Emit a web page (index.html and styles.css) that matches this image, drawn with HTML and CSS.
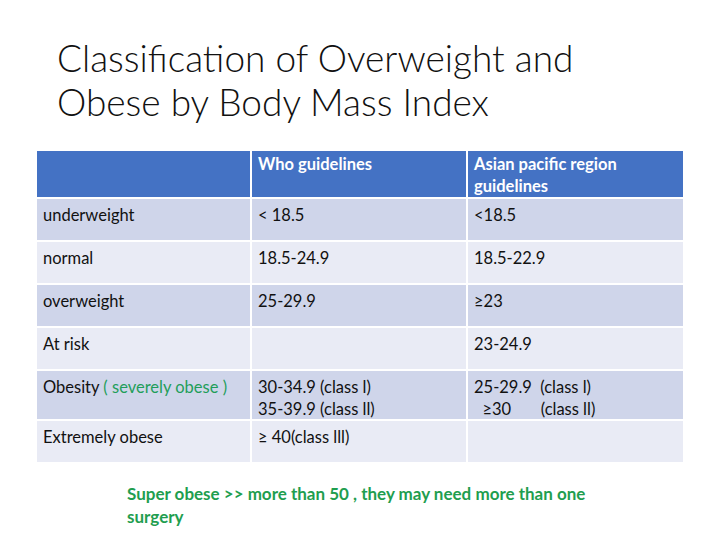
FILE: index.html
```html
<!DOCTYPE html>
<html>
<head>
<meta charset="utf-8">
<link rel="stylesheet" href="styles.css">
</head>
<body>
<div class="slide">
  <h1 class="title">Classification of Overweight and<br>Obese by Body Mass Index</h1>
  <div class="grid">
    <div class="cell head"></div>
    <div class="cell head">Who guidelines</div>
    <div class="cell head">Asian pacific region guidelines</div>

    <div class="cell dark">underweight</div>
    <div class="cell dark">&lt; 18.5</div>
    <div class="cell dark">&lt;18.5</div>

    <div class="cell light">normal</div>
    <div class="cell light">18.5-24.9</div>
    <div class="cell light">18.5-22.9</div>

    <div class="cell dark">overweight</div>
    <div class="cell dark">25-29.9</div>
    <div class="cell dark">≥23</div>

    <div class="cell light">At risk</div>
    <div class="cell light"></div>
    <div class="cell light">23-24.9</div>

    <div class="cell dark">Obesity <span class="green">( severely obese )</span></div>
    <div class="cell dark">30-34.9 (class l)<br>35-39.9 (class ll)</div>
    <div class="cell dark">25-29.9&nbsp; (class l)<br>&nbsp; ≥30&nbsp;&nbsp;&nbsp;&nbsp;&nbsp;&nbsp; (class ll)</div>

    <div class="cell light">Extremely obese</div>
    <div class="cell light">≥ 40(class lll)</div>
    <div class="cell light"></div>
  </div>
  <p class="note">Super obese &gt;&gt; more than 50 , they may need more than one<br>surgery</p>
</div>
</body>
</html>
```
FILE: styles.css
```css
html, body {
  margin: 0;
  padding: 0;
  background: #ffffff;
}
.slide {
  width: 720px;
  height: 540px;
  position: relative;
  font-family: Lato, "Open Sans", sans-serif;
  color: #000;
}
.title {
  margin: 0;
  padding: 36px 0 0 57px;
  font-weight: 300;
  font-size: 37px;
  line-height: 44px;
  color: #111;
  height: 103px;
  box-sizing: border-box;
}
.grid {
  margin: 48px 0 0 37px;
  width: 646px;
  display: grid;
  grid-template-columns: 213px 214px 215px;
  grid-template-rows: 46px 41px 41px 41px 41px 48px 41px;
  gap: 2px;
  background: #fff;
}
.cell {
  padding: 5px 6px 0 6px;
  font-size: 16.5px;
  line-height: 22px;
  box-sizing: border-box;
  color: #111;
}
.head {
  background: #4472c4;
  color: #fff;
  font-weight: 700;
  padding-top: 2px;
}
.dark { background: #cfd5ea; }
.light { background: #e9ebf5; }
.green { color: #1f9e5a; }
.note {
  margin: 20px 0 0 127px;
  font-size: 17px;
  line-height: 23px;
  font-weight: 700;
  color: #1f9e4f;
}
```
